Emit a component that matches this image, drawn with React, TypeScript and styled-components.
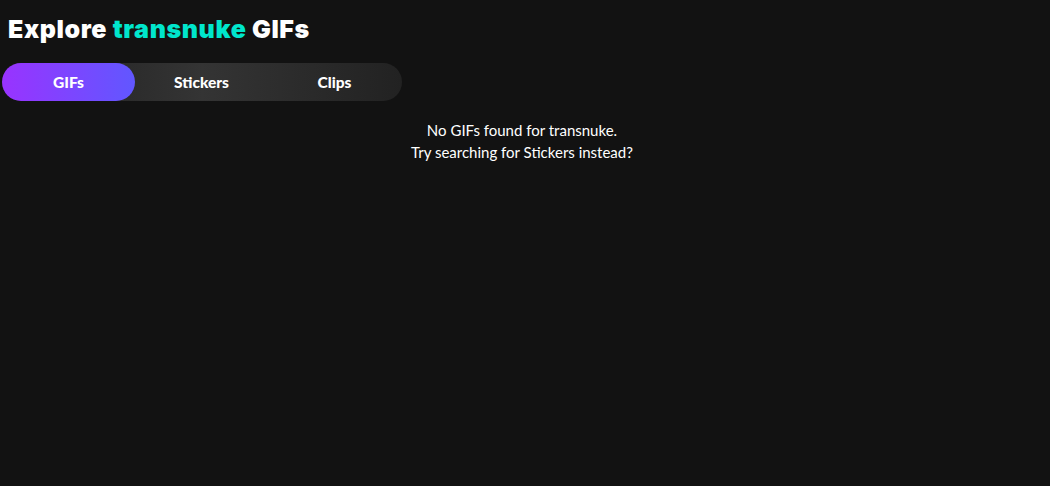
import React from "react";
import styled, { createGlobalStyle } from "styled-components";

const Global = createGlobalStyle`
  html, body { margin: 0; padding: 0; background: #121212; }
  body { font-family: "Lato", "Liberation Sans", sans-serif; color: #fff; }
`;

const Page = styled.div`
  padding: 0 2px;
  min-height: 486px;
  box-sizing: border-box;
`;

const Title = styled.h1`
  margin: 0;
  padding: 14px 0 0 6px;
  height: 47px;
  box-sizing: border-box;
  font-family: "Inter", sans-serif;
  font-weight: 900;
  font-size: 25px;
  line-height: 30px;
  letter-spacing: 0.6px;
  color: #fff;
`;

const Accent = styled.span`
  color: #00e6cc;
`;

const Tabs = styled.div`
  margin-top: 16px;
  display: grid;
  grid-template-columns: repeat(3, 133px);
  width: 400px;
  height: 38px;
  border-radius: 19px;
  background: linear-gradient(90deg, #1e1e1e 0%, #343434 50%, #222 100%);
`;

const Tab = styled.div<{ $active?: boolean }>`
  display: flex;
  align-items: center;
  justify-content: center;
  border-radius: 19px;
  font-family: "Lato", sans-serif;
  font-weight: 900;
  font-size: 15.5px;
  color: #fff;
  background: ${(p) => (p.$active ? "linear-gradient(90deg, #9933ff, #6157ff)" : "transparent")};
`;

const Message = styled.div`
  margin-top: 18px;
  text-align: center;
  font-size: 15px;
  line-height: 22px;
  padding-right: 6px;
  color: #fff;
`;

export default function App() {
  return (
    <>
      <Global />
      <Page>
        <Title>
          Explore <Accent>transnuke</Accent> GIFs
        </Title>
        <Tabs>
          <Tab $active>GIFs</Tab>
          <Tab>Stickers</Tab>
          <Tab>Clips</Tab>
        </Tabs>
        <Message>
          No GIFs found for transnuke.
          <br />
          Try searching for Stickers instead?
        </Message>
      </Page>
    </>
  );
}
